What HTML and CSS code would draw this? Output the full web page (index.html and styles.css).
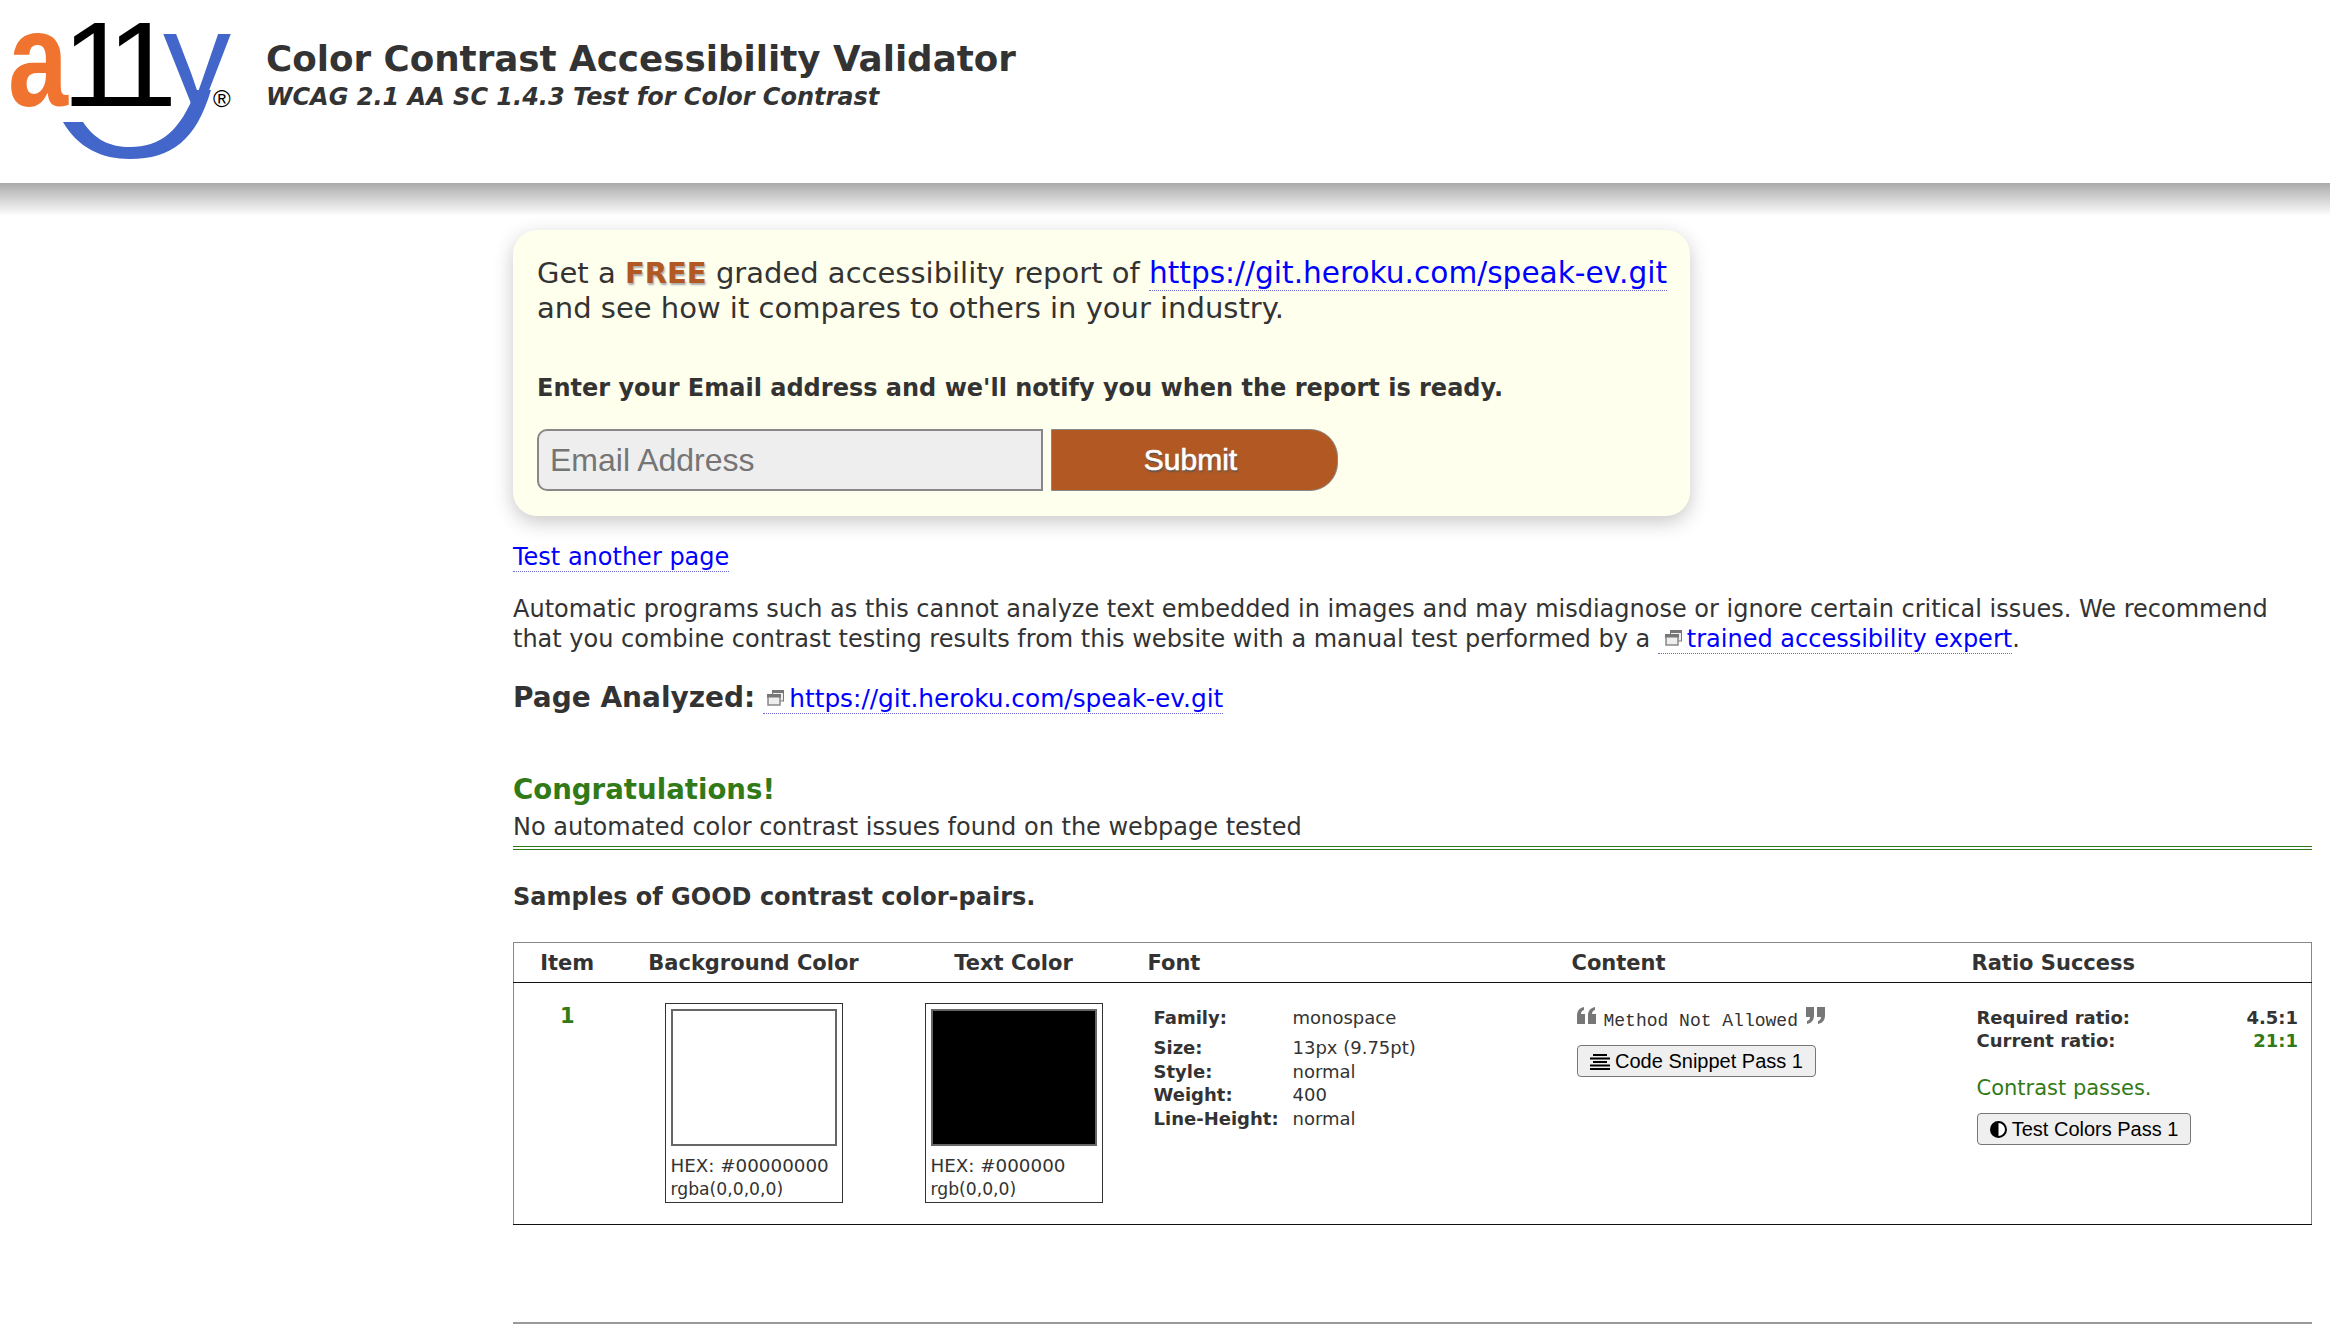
FILE: index.html
```html
<!DOCTYPE html>
<html>
<head>
  <meta charset="UTF-8">
  <meta name="viewport" content="width=device-width, initial-scale=1.0"/>
  <title>Color Contrast Accessibility Validator</title>
  <link rel="stylesheet" href="styles.css">
</head>
<body>
  <div class="header">
    <svg class="logo" width="266" height="170" viewBox="0 0 266 170">
      <defs><clipPath id="y-clip"><rect x="150" y="0" width="116" height="110"/></clipPath></defs>
      <text class="logo-a" x="8" y="106" textLength="60" lengthAdjust="spacingAndGlyphs">a</text>
      <text class="logo-one" x="62" y="106" textLength="70" lengthAdjust="spacingAndGlyphs">1</text>
      <text class="logo-one" x="107" y="106" textLength="70" lengthAdjust="spacingAndGlyphs">1</text>
      <text class="logo-y" x="163" y="106" textLength="68" lengthAdjust="spacingAndGlyphs" clip-path="url(#y-clip)">y</text>
      <path class="logo-swoosh" d="M63 122 C78 148 102 159 130 159 C172 159 196 140 211 90 L196 90 C180 132 160 147 130 147 C110 147 95 140 83 122 Z"/>
      <text class="logo-r" x="213" y="107">®</text>
    </svg>
    <div class="titles">
      <h1>Color Contrast Accessibility Validator</h1>
      <h2>WCAG 2.1 AA SC 1.4.3 Test for Color Contrast</h2>
    </div>
  </div>

  <div class="main">
    <div class="report-box">
      <p class="report-text">Get a <span class="free">FREE</span> graded accessibility report of <a href="#">https://git.heroku.com/speak-ev.git</a> and see how it compares to others in your industry.</p>
      <p class="report-ask">Enter your Email address and we'll notify you when the report is ready.</p>
      <form class="report-form">
        <input type="text" placeholder="Email Address">
        <button type="button">Submit</button>
      </form>
    </div>

    <p class="another"><a href="#">Test another page</a></p>
    <p class="warning">Automatic programs such as this cannot analyze text embedded in images and may misdiagnose or ignore certain critical issues. We recommend that you combine contrast testing results from this website with a manual test performed by a <a href="#"><svg class="ext" width="17" height="16" viewBox="0 0 17 16"><rect x="5.500" y="1" width="11" height="10" fill="#eee" stroke="#777"/><rect x="5" y="0" width="12" height="3" fill="#777"/><rect x="1" y="5" width="12" height="10" fill="#eee" stroke="#888" stroke-width="1.500"/><rect x="0" y="4" width="14" height="3.500" fill="#777"/></svg>trained accessibility expert</a>.</p>
    <p class="analyzed"><b>Page Analyzed:</b> <a href="#"><svg class="ext" width="17" height="16" viewBox="0 0 17 16"><rect x="5.500" y="1" width="11" height="10" fill="#eee" stroke="#777"/><rect x="5" y="0" width="12" height="3" fill="#777"/><rect x="1" y="5" width="12" height="10" fill="#eee" stroke="#888" stroke-width="1.500"/><rect x="0" y="4" width="14" height="3.500" fill="#777"/></svg>https://git.heroku.com/speak-ev.git</a></p>

    <h3 class="congrats">Congratulations!</h3>
    <p class="no-issues">No automated color contrast issues found on the webpage tested</p>
    <p class="samples">Samples of GOOD contrast color-pairs.</p>

    <table class="results">
      <colgroup>
        <col class="col-item"><col class="col-bg"><col class="col-text"><col class="col-font"><col class="col-content"><col class="col-ratio">
      </colgroup>
      <thead>
        <tr>
          <th class="center">Item</th>
          <th class="center">Background Color</th>
          <th class="center">Text Color</th>
          <th>Font</th>
          <th>Content</th>
          <th>Ratio Success</th>
        </tr>
      </thead>
      <tbody>
        <tr>
          <td class="item-no">1</td>
          <td>
            <div class="swatch">
              <div class="chip chip-white"></div>
              <div class="hex">HEX: #00000000</div>
              <div class="rgb">rgba(0,0,0,0)</div>
            </div>
          </td>
          <td>
            <div class="swatch">
              <div class="chip chip-black"></div>
              <div class="hex">HEX: #000000</div>
              <div class="rgb">rgb(0,0,0)</div>
            </div>
          </td>
          <td>
            <dl class="font-info">
              <dt class="first">Family:</dt><dd class="first">monospace</dd>
              <dt>Size:</dt><dd>13px (9.75pt)</dd>
              <dt>Style:</dt><dd>normal</dd>
              <dt>Weight:</dt><dd>400</dd>
              <dt>Line-Height:</dt><dd>normal</dd>
            </dl>
          </td>
          <td>
            <div class="quote-line">
              <svg class="quote" width="20" height="18" viewBox="0 0 20 18"><path d="M0 9C0 4 2 1 7 0v3C5 3.500 4 5 4 7h4v10H0zM11 9c0-5 2-8 7-9v3c-2 .5-3 2-3 4h4v10h-8z" fill="#777"/></svg>
              <span class="sample-text">Method Not Allowed</span>
              <svg class="quote" width="20" height="18" viewBox="0 0 20 18"><path d="M20 8c0 5-2 8-7 9v-3c2-.5 3-2 3-4h-4V0h8zM9 8c0 5-2 8-7 9v-3c2-.5 3-2 3-4H1V0h8z" fill="#777"/></svg>
            </div>
            <button class="small-btn snippet-btn"><svg width="20" height="16" viewBox="0 0 20 16"><path d="M3 0h14v2H3zM0 3.500h20v2H0zM3 7h14v2H3zM0 10.500h20v2H0zM0 14h20v2H0z" fill="#000"/></svg> Code Snippet Pass 1</button>
          </td>
          <td>
            <div class="ratio-row"><span>Required ratio:</span><span>4.5:1</span></div>
            <div class="ratio-row"><span>Current ratio:</span><span class="green">21:1</span></div>
            <p class="passes">Contrast passes.</p>
            <button class="small-btn"><svg width="17" height="17" viewBox="0 0 17 17"><circle cx="8.500" cy="8.500" r="7.500" fill="#fff" stroke="#000" stroke-width="2"/><path d="M8.500 1a7.500 7.500 0 0 0 0 15z" fill="#000"/></svg> Test Colors Pass 1</button>
          </td>
        </tr>
      </tbody>
    </table>
    <hr class="bottom-rule">
  </div>
</body>
</html>
```

FILE: styles.css
```css
body {
  margin: 0;
  font-family: "DejaVu Sans", Verdana, sans-serif;
  color: #333;
  background: #fff;
}
a {
  color: #00f;
  text-decoration: none;
  border-bottom: 1px dotted #6a6ad0;
}
p, h1, h2, h3 {
  margin: 0;
}

.header {
  height: 183px;
  display: flex;
  position: relative;
}
.header::after {
  content: "";
  position: absolute;
  left: 0;
  right: 0;
  top: 183px;
  height: 33px;
  background: linear-gradient(#aaa, #fff);
}
.logo {
  flex: none;
}
.logo-a, .logo-y, .logo-one, .logo-r {
  font-family: "Liberation Sans", Arial, sans-serif;
}
.logo-a {
  font-size: 136px;
  font-weight: bold;
  fill: #f07430;
}
.logo-one {
  font-size: 120px;
  fill: #000;
}
.logo-y {
  font-size: 136px;
  fill: #4266c9;
}
.logo-swoosh {
  fill: #4266c9;
}
.logo-r {
  font-size: 24px;
  fill: #000;
}
.titles {
  padding-top: 35px;
}
.titles h1 {
  font-size: 35.700px;
  line-height: 48px;
}
.titles h2 {
  font-size: 24px;
  font-style: italic;
  line-height: 28px;
}

.main {
  margin: 47px 18px 0 513px;
}
.report-box {
  width: 1177px;
  height: 286px;
  box-sizing: border-box;
  padding: 26px 16px 0 24px;
  background: #ffffee;
  border-radius: 24px;
  box-shadow: 0 6px 20px rgba(0, 0, 0, 0.22);
}
.report-text {
  font-size: 29px;
  line-height: 35px;
}
.report-text a {
  font-size: 29.600px;
  white-space: nowrap;
}
.free {
  font-weight: bold;
  color: #b25923;
  text-shadow: 1px 2px 2px #aaa;
}
.report-ask {
  margin-top: 44px;
  font-size: 24px;
  font-weight: bold;
  line-height: 36px;
}
.report-form {
  margin-top: 23px;
  display: flex;
  gap: 8px;
}
.report-form input {
  width: 506px;
  height: 62px;
  box-sizing: border-box;
  padding: 0 11px;
  font-family: "Liberation Sans", Arial, sans-serif;
  font-size: 32px;
  background: #eee;
  border: 2px solid #888;
  border-radius: 10px 0 0 10px;
}
.report-form input::placeholder {
  color: #757575;
}
.report-form button {
  width: 287px;
  height: 62px;
  padding: 0 8px 0 0;
  font-family: "Liberation Sans", Arial, sans-serif;
  font-size: 30px;
  color: #fff;
  -webkit-text-stroke: 0.6px #fff;
  text-shadow: 1px 2px 2px #555;
  background: #b25923;
  border: 1px solid #888;
  border-radius: 0 28px 28px 0;
}

.another {
  margin-top: 24px;
  font-size: 24px;
  line-height: 34px;
}
.warning {
  margin-top: 20px;
  font-size: 24px;
  line-height: 30px;
}
.ext {
  margin: 0 5px 1px 4px;
}
.warning .ext {
  margin-left: 7px;
}
.analyzed {
  margin-top: 26px;
  font-size: 24.800px;
  line-height: 36px;
}
.analyzed b {
  font-size: 28px;
}
.congrats {
  margin-top: 54px;
  font-size: 27.600px;
  line-height: 38px;
  color: #317a17;
}
.no-issues {
  margin-top: 3px;
  padding-bottom: 4px;
  font-size: 24px;
  line-height: 30px;
  border-bottom: 4px double #317a17;
}
.samples {
  margin-top: 29px;
  font-size: 24px;
  font-weight: bold;
  line-height: 36px;
}

.results {
  margin-top: 27px;
  width: 100%;
  height: 283px;
  table-layout: fixed;
  border-collapse: collapse;
  border: 1px solid #888;
  border-bottom: 1px solid #111;
}
.col-item { width: 107px; }
.col-bg { width: 266px; }
.col-text { width: 254px; }
.col-font { width: 424px; }
.col-content { width: 400px; }
.results th {
  height: 39px;
  padding: 0 0 0 7px;
  font-size: 21px;
  text-align: left;
  border-bottom: 1px solid #111;
}
.results th.center {
  padding: 0;
  text-align: center;
}
.results td {
  padding: 20px 0 0 12px;
  vertical-align: top;
  font-size: 18px;
}
.results td.item-no {
  padding: 21px 0 0;
  font-size: 21px;
  font-weight: bold;
  text-align: center;
  color: #317a17;
}
.swatch {
  width: 178px;
  height: 200px;
  margin: 0 auto;
  transform: translateX(-6px);
  box-sizing: border-box;
  padding: 5px;
  border: 1px solid #333;
}
.chip {
  height: 137px;
  box-sizing: border-box;
  border: 2px solid #666;
}
.chip-white { background: #fff; }
.chip-black { background: #000; }
.hex {
  margin-top: 8px;
  line-height: 24px;
  font-size: 18.300px;
}
.rgb {
  font-size: 17.200px;
  line-height: 23px;
}
.font-info {
  margin: 3px 0 0 1px;
  display: grid;
  grid-template-columns: 139px 1fr;
  line-height: 23.500px;
}
.font-info dt {
  font-weight: bold;
}
.font-info dd {
  margin: 0;
}
.font-info .first {
  height: 30px;
}
.quote-line {
  display: flex;
  align-items: flex-start;
  gap: 7px;
  margin-top: -2px;
  height: 31px;
}
.quote {
  margin-top: 6px;
}
.sample-text {
  margin-top: 10px;
  font-family: "Liberation Mono", monospace;
  font-size: 18px;
  line-height: 20px;
}
.small-btn {
  height: 32px;
  display: block;
  margin-top: 13px;
  padding: 0 12px;
  font-family: "Liberation Sans", Arial, sans-serif;
  font-size: 20px;
  color: #000;
  background: #efefef;
  border: 1px solid #767676;
  border-radius: 4px;
  white-space: nowrap;
}
.small-btn svg {
  vertical-align: -2px;
}
.ratio-row {
  display: flex;
  justify-content: space-between;
  margin-right: 13px;
  line-height: 23px;
  font-weight: bold;
}
.ratio-row:first-child {
  margin-top: 3px;
}
.green {
  color: #317a17;
}
.passes {
  margin-top: 24px;
  font-size: 21px;
  line-height: 24px;
  color: #317a17;
}
.bottom-rule {
  margin: 97px 0 0;
  height: 2px;
  background: #999;
  border: 0;
}
```
